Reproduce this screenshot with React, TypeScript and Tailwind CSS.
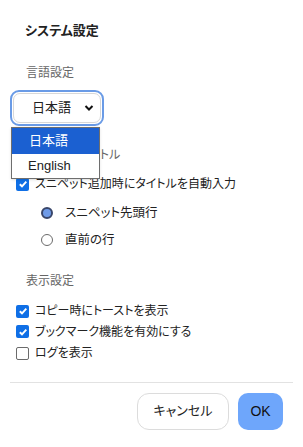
import { useState } from "react";

const CheckBox = ({ checked }: { checked: boolean }) =>
  checked ? (
    <span className="w-[13px] h-[13px] rounded-[2px] bg-[#0f6fe6] flex items-center justify-center shrink-0">
      <svg width="10" height="10" viewBox="0 0 10 10">
        <path d="M1.8 5.2 L4 7.3 L8.3 2.6" fill="none" stroke="#fff" strokeWidth="1.9" />
      </svg>
    </span>
  ) : (
    <span className="w-[13px] h-[13px] rounded-[2px] border border-[#6b6b6b] bg-white shrink-0" />
  );

const Radio = ({ checked }: { checked: boolean }) =>
  checked ? (
    <span className="w-[12px] h-[12px] rounded-full border-2 border-[#39466a] bg-[#6f9be8] shrink-0" />
  ) : (
    <span className="w-[12px] h-[12px] rounded-full border border-[#6b6b6b] bg-white shrink-0" />
  );

const App = () => {
  const [autoTitle] = useState(true);
  const [radio] = useState("head");
  const opts = [
    { label: "コピー時にトーストを表示", on: true, mt: "mt-0" },
    { label: "ブックマーク機能を有効にする", on: true, mt: "mt-0" },
    { label: "ログを表示", on: false, mt: "mt-px" },
  ];

  return (
    <div
      className="relative w-[303px] h-[447px] bg-white text-[#222] px-[10px] overflow-hidden [font-feature-settings:'palt']"
      style={{ fontFamily: '"Liberation Sans", "Noto Sans CJK JP", sans-serif' }}
    >
      <h1 className="pt-[22px] pl-[15px] text-[13px] leading-[18px] font-bold">
        システム設定
      </h1>

      <p className="mt-[25px] pl-[16px] text-[12px] leading-[16px] text-[#666]">
        言語設定
      </p>

      <div className="mt-[9px] w-[94px] h-[36px] rounded-[9px] border-2 border-[#6a9be6] p-px">
        <div className="h-full rounded-[7px] border border-[#d8d8d8] bg-white flex items-center pl-[18px] pr-[6px]">
          <span className="text-[13px]">日本語</span>
          <svg className="ml-auto" width="10" height="8" viewBox="0 0 10 8">
            <path d="M1.5 2 L5 5.5 L8.5 2" fill="none" stroke="#111" strokeWidth="2" />
          </svg>
        </div>
      </div>

      <p className="mt-[21px] pl-[16px] text-[12px] leading-[16px] text-[#666]">
        スニペットタイトル
      </p>

      <label className="mt-[11px] h-[20px] pl-[6px] flex items-center gap-[6px] text-[12px]">
        <CheckBox checked={autoTitle} />
        スニペット追加時にタイトルを自動入力
      </label>

      <div className="mt-[9px] pl-[31px] flex flex-col gap-[7px] text-[12.5px]">
        <label className="h-[20px] flex items-center gap-[12px]">
          <Radio checked={radio === "head"} />
          スニペット先頭行
        </label>
        <label className="h-[20px] flex items-center gap-[12px]">
          <Radio checked={radio === "prev"} />
          直前の行
        </label>
      </div>

      <p className="mt-[23px] pl-[16px] text-[12px] leading-[16px] text-[#666]">
        表示設定
      </p>

      <div className="mt-[12px] flex flex-col text-[12px]">
        {opts.map((o) => (
          <label key={o.label} className={`${o.mt} h-[20.5px] pl-[6px] flex items-center gap-[6px]`}>
            <CheckBox checked={o.on} />
            {o.label}
          </label>
        ))}
      </div>

      <div className="mt-[18px] h-px bg-[#e2e2e2]" />

      <div className="mt-[10px] flex justify-end gap-[9px] pr-[10px]">
        <button className="w-[92px] h-[37px] rounded-[12px] border border-[#dcdcdc] bg-white text-[13px]">
          キャンセル
        </button>
        <button className="w-[45px] h-[37px] rounded-[10px] bg-[#6ea6fb] text-[14px] text-[#111]">
          OK
        </button>
      </div>

      {/* open native select list */}
      <div className="absolute left-[11px] top-[127px] w-[89px] border border-[#6e6e6e] bg-white text-[13px] shadow-sm">
        <div className="h-[26px] bg-[#1b60d1] text-white flex items-center pl-[17px]">日本語</div>
        <div className="h-[24px] flex items-center pl-[16px]">English</div>
      </div>
    </div>
  );
};

export default App;
